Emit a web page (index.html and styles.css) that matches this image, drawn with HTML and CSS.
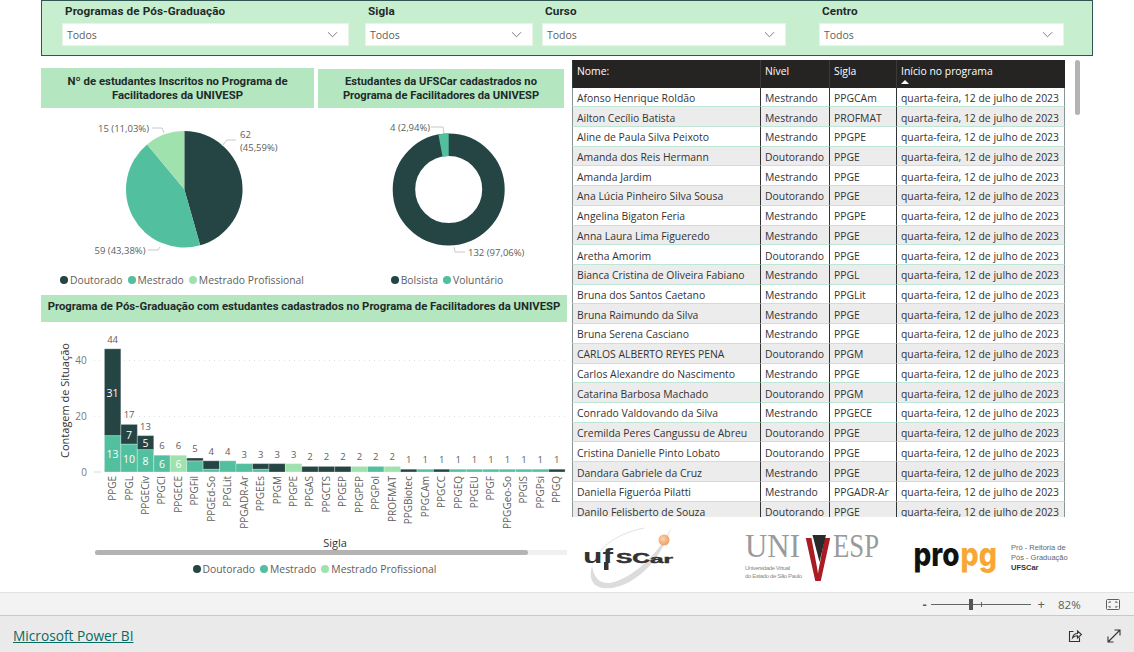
FILE: index.html
```html
<!DOCTYPE html>
<html lang="pt-BR">
<head>
<meta charset="utf-8">
<title>Microsoft Power BI</title>
<link rel="stylesheet" href="styles.css">
</head>
<body>
<main class="canvas">
  <section class="filters">
    <div class="slicer s1"><label>Programas de Pós-Graduação</label><div class="select"><span>Todos</span><svg class="chev" viewBox="0 0 12 7"><path d="M1 1l5 5 5-5"/></svg></div></div>
    <div class="slicer s2"><label>Sigla</label><div class="select"><span>Todos</span><svg class="chev" viewBox="0 0 12 7"><path d="M1 1l5 5 5-5"/></svg></div></div>
    <div class="slicer s3"><label>Curso</label><div class="select"><span>Todos</span><svg class="chev" viewBox="0 0 12 7"><path d="M1 1l5 5 5-5"/></svg></div></div>
    <div class="slicer s4"><label>Centro</label><div class="select"><span>Todos</span><svg class="chev" viewBox="0 0 12 7"><path d="M1 1l5 5 5-5"/></svg></div></div>
  </section>

  <div class="main">
    <div class="left">
      <div class="pies">
        <section class="pie-card c1">
          <h2 class="title">Nº de estudantes Inscritos no Programa de Facilitadores da UNIVESP</h2>
          <svg class="chart" viewBox="41 108 273 162" width="273" height="162">
            <path class="d" d="M184.3 189.3V131.1A58.2 58.2 0 0 1 200.2 245.3Z"/>
            <path class="m" d="M184.3 189.3L200.2 245.3A58.2 58.2 0 0 1 147.1 144.5Z"/>
            <path class="p" d="M184.3 189.3L147.1 144.5A58.2 58.2 0 0 1 184.3 131.1Z"/>
            <path class="lead" d="M152 128H162L164 133M222 146L227 140H236M160 247L158 250H148"/>
            <text class="lbl" x="98" y="132">15 (11,03%)</text>
            <text class="lbl" x="240" y="138">62</text>
            <text class="lbl" x="240" y="151">(45,59%)</text>
            <text class="lbl" x="94.500" y="254">59 (43,38%)</text>
          </svg>
          <ul class="legend"><li><i class="dot d"></i>Doutorado</li><li><i class="dot m"></i>Mestrado</li><li><i class="dot p"></i>Mestrado Profissional</li></ul>
        </section>
        <section class="pie-card c2">
          <h2 class="title">Estudantes da UFSCar cadastrados no Programa de Facilitadores da UNIVESP</h2>
          <svg class="chart" viewBox="318 108 246 162" width="246" height="162">
            <circle class="ring" cx="448.7" cy="189.5" r="44.75"/>
            <path class="m" d="M448.7 133.5A56 56 0 0 0 438.4 134.5L442.5 156.6A33.5 33.5 0 0 1 448.7 156Z"/>
            <path class="lead" d="M431 127H443L444 133M454 247L455 252H465"/>
            <text class="lbl" x="390" y="131">4 (2,94%)</text>
            <text class="lbl" x="468" y="256">132 (97,06%)</text>
          </svg>
          <ul class="legend"><li><i class="dot d"></i>Bolsista</li><li><i class="dot m"></i>Voluntário</li></ul>
        </section>
      </div>

      <section class="bars-card">
        <h2 class="title wide">Programa de Pós-Graduação com estudantes cadastrados no Programa de Facilitadores da UNIVESP</h2>
        <svg class="chart" viewBox="41 322 526 228" width="526" height="228">
          <path class="grid" d="M94 360.3H567M94 416.3H567"/>
          <path class="tick" d="M94 472H101"/>
          <text class="axis" x="81" y="364" text-anchor="middle">40</text>
          <text class="axis" x="81" y="420" text-anchor="middle">20</text>
          <text class="axis" x="84" y="476" text-anchor="middle">0</text>
          <text class="ytitle" transform="translate(69,400.5) rotate(-90)" text-anchor="middle">Contagem de Situação</text>
          <text class="xtitle" x="335" y="547" text-anchor="middle">Sigla</text>

          <g class="bars">
            <rect class="m" x="104.4" y="435.6" width="16.45" height="36.4"/><rect class="d" x="104.4" y="348.8" width="16.45" height="86.8"/>
            <rect class="m" x="120.9" y="444" width="16.45" height="28"/><rect class="d" x="120.9" y="424.4" width="16.45" height="19.6"/>
            <rect class="m" x="137.3" y="449.6" width="16.45" height="22.4"/><rect class="d" x="137.3" y="435.6" width="16.45" height="14"/>
            <rect class="m" x="153.8" y="455.2" width="16.45" height="16.8"/>
            <rect class="p" x="170.2" y="455.2" width="16.45" height="16.8"/>
            <rect class="m" x="186.7" y="460.8" width="16.45" height="11.2"/><rect class="d" x="186.7" y="458" width="16.45" height="2.8"/>
            <rect class="m" x="203.1" y="469.2" width="16.45" height="2.8"/><rect class="d" x="203.1" y="460.8" width="16.45" height="8.4"/>
            <rect class="m" x="219.6" y="460.8" width="16.45" height="11.2"/>
            <rect class="m" x="236" y="463.6" width="16.45" height="8.4"/>
            <rect class="m" x="252.5" y="469.2" width="16.45" height="2.8"/><rect class="d" x="252.5" y="463.6" width="16.45" height="5.6"/>
            <rect class="d" x="268.9" y="463.6" width="16.45" height="8.4"/>
            <rect class="p" x="285.4" y="463.6" width="16.45" height="8.4"/>
            <rect class="d" x="301.8" y="466.4" width="16.45" height="5.6"/>
            <rect class="d" x="318.3" y="466.4" width="16.45" height="5.6"/>
            <rect class="d" x="334.7" y="466.4" width="16.45" height="5.6"/>
            <rect class="p" x="351.2" y="466.4" width="16.45" height="5.6"/>
            <rect class="m" x="367.6" y="466.4" width="16.45" height="5.6"/>
            <rect class="p" x="384.1" y="466.4" width="16.45" height="5.6"/>
            <rect class="d" x="400.5" y="469.2" width="16.45" height="2.8"/>
            <rect class="m" x="417" y="469.2" width="16.45" height="2.8"/>
            <rect class="d" x="433.4" y="469.2" width="16.45" height="2.8"/>
            <rect class="m" x="449.9" y="469.2" width="16.45" height="2.8"/>
            <rect class="m" x="466.3" y="469.2" width="16.45" height="2.8"/>
            <rect class="m" x="482.8" y="469.2" width="16.45" height="2.8"/>
            <rect class="m" x="499.2" y="469.2" width="16.45" height="2.8"/>
            <rect class="m" x="515.7" y="469.2" width="16.45" height="2.8"/>
            <rect class="m" x="532.1" y="469.2" width="16.45" height="2.8"/>
            <rect class="d" x="548.6" y="469.2" width="16.45" height="2.8"/>
          </g>

          <g class="inner" text-anchor="middle">
            <text x="112.6" y="396.5">31</text><text x="112.6" y="458">13</text>
            <text x="129.1" y="438.5">7</text><text x="129.1" y="462.5">10</text>
            <text x="145.5" y="446.5">5</text><text x="145.5" y="465">8</text>
            <text x="162" y="468">6</text><text x="178.4" y="468">6</text>
          </g>

          <g class="totals" text-anchor="middle">
            <text x="112.6" y="342.8">44</text><text x="129.1" y="418.4">17</text><text x="145.5" y="429.6">13</text>
            <text x="162" y="449.2">6</text><text x="178.4" y="449.2">6</text><text x="194.9" y="452">5</text>
            <text x="211.3" y="454.8">4</text><text x="227.8" y="454.8">4</text><text x="244.2" y="457.6">3</text>
            <text x="260.7" y="457.6">3</text><text x="277.1" y="457.6">3</text><text x="293.6" y="457.6">3</text>
            <text x="310" y="460.4">2</text><text x="326.5" y="460.4">2</text><text x="342.9" y="460.4">2</text>
            <text x="359.4" y="460.4">2</text><text x="375.8" y="460.4">2</text><text x="392.3" y="460.4">2</text>
            <text x="408.7" y="463.2">1</text><text x="425.2" y="463.2">1</text><text x="441.6" y="463.2">1</text>
            <text x="458.1" y="463.2">1</text><text x="474.5" y="463.2">1</text><text x="491" y="463.2">1</text>
            <text x="507.4" y="463.2">1</text><text x="523.9" y="463.2">1</text><text x="540.3" y="463.2">1</text>
            <text x="556.8" y="463.2">1</text>
          </g>

          <g class="xl" text-anchor="end">
            <text transform="translate(116,476) rotate(-90)">PPGE</text>
            <text transform="translate(132.5,476) rotate(-90)">PPGL</text>
            <text transform="translate(149,476) rotate(-90)">PPGECiv</text>
            <text transform="translate(165.4,476) rotate(-90)">PPGCI</text>
            <text transform="translate(181.8,476) rotate(-90)">PPGECE</text>
            <text transform="translate(198.3,476) rotate(-90)">PPGFil</text>
            <text transform="translate(214.7,476) rotate(-90)">PPGEd-So</text>
            <text transform="translate(231.2,476) rotate(-90)">PPGLit</text>
            <text transform="translate(247.6,476) rotate(-90)">PPGADR-Ar</text>
            <text transform="translate(264.1,476) rotate(-90)">PPGEEs</text>
            <text transform="translate(280.5,476) rotate(-90)">PPGM</text>
            <text transform="translate(297,476) rotate(-90)">PPGPE</text>
            <text transform="translate(313.4,476) rotate(-90)">PPGAS</text>
            <text transform="translate(329.9,476) rotate(-90)">PPGCTS</text>
            <text transform="translate(346.3,476) rotate(-90)">PPGEP</text>
            <text transform="translate(362.8,476) rotate(-90)">PPGPEP</text>
            <text transform="translate(379.2,476) rotate(-90)">PPGPol</text>
            <text transform="translate(395.7,476) rotate(-90)">PROFMAT</text>
            <text transform="translate(412.1,476) rotate(-90)">PPGBiotec</text>
            <text transform="translate(428.6,476) rotate(-90)">PPGCAm</text>
            <text transform="translate(445,476) rotate(-90)">PPGCC</text>
            <text transform="translate(461.5,476) rotate(-90)">PPGEQ</text>
            <text transform="translate(477.9,476) rotate(-90)">PPGEU</text>
            <text transform="translate(494.4,476) rotate(-90)">PPGF</text>
            <text transform="translate(510.8,476) rotate(-90)">PPGGeo-So</text>
            <text transform="translate(527.3,476) rotate(-90)">PPGIS</text>
            <text transform="translate(543.7,476) rotate(-90)">PPGPsi</text>
            <text transform="translate(560.2,476) rotate(-90)">PPGQ</text>
          </g>
        </svg>
        <div class="hscroll"><div class="hthumb"></div></div>
        <ul class="legend lg3"><li><i class="dot d"></i>Doutorado</li><li><i class="dot m"></i>Mestrado</li><li><i class="dot p"></i>Mestrado Profissional</li></ul>
      </section>
    </div>

    <div class="right">
      <div class="table-wrap">
        <table class="grid-table">
          <colgroup><col class="c-n"><col class="c-l"><col class="c-s"><col class="c-d"></colgroup>
          <thead><tr><th>Nome:</th><th>Nível</th><th>Sigla</th><th>Início no programa<svg class="sort" viewBox="0 0 8 4"><path d="M4 0L8 4H0Z"/></svg></th></tr></thead>
          <tbody>
            <tr><td>Afonso Henrique Roldão</td><td>Mestrando</td><td>PPGCAm</td><td>quarta-feira, 12 de julho de 2023</td></tr>
            <tr><td>Ailton Cecílio Batista</td><td>Mestrando</td><td>PROFMAT</td><td>quarta-feira, 12 de julho de 2023</td></tr>
            <tr><td>Aline de Paula Silva Peixoto</td><td>Mestrando</td><td>PPGPE</td><td>quarta-feira, 12 de julho de 2023</td></tr>
            <tr><td>Amanda dos Reis Hermann</td><td>Doutorando</td><td>PPGE</td><td>quarta-feira, 12 de julho de 2023</td></tr>
            <tr><td>Amanda Jardim</td><td>Mestrando</td><td>PPGE</td><td>quarta-feira, 12 de julho de 2023</td></tr>
            <tr><td>Ana Lúcia Pinheiro Silva Sousa</td><td>Doutorando</td><td>PPGE</td><td>quarta-feira, 12 de julho de 2023</td></tr>
            <tr><td>Angelina Bigaton Feria</td><td>Mestrando</td><td>PPGPE</td><td>quarta-feira, 12 de julho de 2023</td></tr>
            <tr><td>Anna Laura Lima Figueredo</td><td>Mestrando</td><td>PPGE</td><td>quarta-feira, 12 de julho de 2023</td></tr>
            <tr><td>Aretha Amorim</td><td>Doutorando</td><td>PPGE</td><td>quarta-feira, 12 de julho de 2023</td></tr>
            <tr><td>Bianca Cristina de Oliveira Fabiano</td><td>Mestrando</td><td>PPGL</td><td>quarta-feira, 12 de julho de 2023</td></tr>
            <tr><td>Bruna dos Santos Caetano</td><td>Mestrando</td><td>PPGLit</td><td>quarta-feira, 12 de julho de 2023</td></tr>
            <tr><td>Bruna Raimundo da Silva</td><td>Mestrando</td><td>PPGE</td><td>quarta-feira, 12 de julho de 2023</td></tr>
            <tr><td>Bruna Serena Casciano</td><td>Mestrando</td><td>PPGE</td><td>quarta-feira, 12 de julho de 2023</td></tr>
            <tr><td>CARLOS ALBERTO REYES PENA</td><td>Doutorando</td><td>PPGM</td><td>quarta-feira, 12 de julho de 2023</td></tr>
            <tr><td>Carlos Alexandre do Nascimento</td><td>Mestrando</td><td>PPGE</td><td>quarta-feira, 12 de julho de 2023</td></tr>
            <tr><td>Catarina Barbosa Machado</td><td>Doutorando</td><td>PPGM</td><td>quarta-feira, 12 de julho de 2023</td></tr>
            <tr><td>Conrado Valdovando da Silva</td><td>Mestrando</td><td>PPGECE</td><td>quarta-feira, 12 de julho de 2023</td></tr>
            <tr><td>Cremilda Peres Cangussu de Abreu</td><td>Doutorando</td><td>PPGE</td><td>quarta-feira, 12 de julho de 2023</td></tr>
            <tr><td>Cristina Danielle Pinto Lobato</td><td>Doutorando</td><td>PPGE</td><td>quarta-feira, 12 de julho de 2023</td></tr>
            <tr><td>Dandara Gabriele da Cruz</td><td>Mestrando</td><td>PPGE</td><td>quarta-feira, 12 de julho de 2023</td></tr>
            <tr><td>Daniella Figueróa Pilatti</td><td>Mestrando</td><td>PPGADR-Ar</td><td>quarta-feira, 12 de julho de 2023</td></tr>
            <tr><td>Danilo Felisberto de Souza</td><td>Doutorando</td><td>PPGE</td><td>quarta-feira, 12 de julho de 2023</td></tr>
          </tbody>
        </table>
        <div class="vthumb"></div>
      </div>
      <svg class="logos" viewBox="572 517 500 75" width="500" height="75">
        <defs>
          <radialGradient id="orb" cx="40%" cy="40%" r="65%"><stop offset="0" stop-color="#fbd3ae"/><stop offset="1" stop-color="#ef9a5e"/></radialGradient>
        </defs>
        <path class="swoosh-thin" d="M644 528C620 533 600 545 594 562"/>
        <path class="swoosh" d="M592 566C587 584 598 590 612 588C636 584 660 562 672 526C660 553 632 579 610 583C600 584 594 578 592 566Z"/>
        <circle cx="664" cy="540" r="5.500" fill="url(#orb)"/>
        <text class="uf1" x="583" y="563" textLength="30" lengthAdjust="spacingAndGlyphs">uf</text>
        <rect class="ufstem" x="604" y="562" width="4.500" height="8"/>
        <text class="uf2" x="616" y="563" textLength="34" lengthAdjust="spacingAndGlyphs">SC</text>
        <text class="uf3" x="650" y="563" textLength="23" lengthAdjust="spacingAndGlyphs">ar</text>

        <text class="uni" x="745" y="557" textLength="55" lengthAdjust="spacingAndGlyphs">UNI</text>
        <text class="uni" x="833" y="557" textLength="46" lengthAdjust="spacingAndGlyphs">ESP</text>
        <text class="unv" transform="translate(805.500,581) scale(1.44,2.45)">V</text>
        <path class="unk" d="M812.500 535H826L819.500 562Z"/>
        <text class="unsub" x="745" y="570" textLength="45">Universidade Virtual</text>
        <text class="unsub" x="745" y="578" textLength="57">do Estado de São Paulo</text>

        <text class="pro" x="913.500" y="566" textLength="46" lengthAdjust="spacingAndGlyphs">pro</text>
        <text class="pg" x="960.500" y="566" textLength="36.500" lengthAdjust="spacingAndGlyphs">pg</text>
        <text class="prt" x="1011" y="550">Pró - Reitoria de</text>
        <text class="prt" x="1011" y="560">Pós - Graduação</text>
        <text class="prt b" x="1011" y="570">UFSCar</text>
      </svg>
    </div>
  </div>
</main>

<div class="status">
  <span class="zm minus">-</span>
  <div class="slider"><i class="s-mid"></i><i class="s-thumb"></i></div>
  <span class="zm plus">+</span>
  <span class="pct">82%</span>
  <svg class="fit" viewBox="0 0 14 11"><rect x=".5" y=".5" width="13" height="10" rx="1"/><path d="M3 4V3H5M9 3H11V4M11 7V8H9M5 8H3V7"/></svg>
</div>

<footer class="footer">
  <a class="pbi" href="#">Microsoft Power BI</a>
  <div class="foot-icons">
    <svg viewBox="0 0 14 14"><path d="M5.500 2.500H1.500V12.500H11.500V8.500"/><path d="M4.500 9C5 6 7 4.500 9.500 4.500V2L13.500 5.500L9.500 9V6.800C7.500 6.800 5.800 7.500 4.500 9Z"/></svg>
    <svg viewBox="0 0 14 14"><path d="M1 13L13 1M7.500 1H13V6.500M1 7.500V13H6.500"/></svg>
  </div>
</footer>
</body>
</html>
```
FILE: styles.css
```css
* { box-sizing: border-box; }
html, body { margin: 0; padding: 0; }
body {
  width: 1134px; height: 652px; overflow: hidden; background: #fff;
  font-family: "Open Sans", "Noto Sans", sans-serif; color: #333;
  display: flex; flex-direction: column;
}
.canvas { height: 592px; overflow: hidden; }

/* filters */
.filters {
  margin-left: 41px; width: 1052px; height: 56px; padding-left: 20px;
  background: #c8eed0; border: 1px solid #2f5650;
  display: flex;
}
.slicer { display: flex; flex-direction: column; flex: none; }
.slicer label {
  font: 700 11.700px/21px Roboto, sans-serif; color: #1f2b2a; padding-left: 3px; height: 22px; letter-spacing: .1px;
}
.s1 { width: 287px; margin-right: 16px; }
.s2 { width: 168px; margin-right: 9px; }
.s3 { width: 244px; margin-right: 33px; }
.s4 { width: 245px; }
.select {
  height: 23px; background: #fff; border: 1px solid #e8f4ea; padding: 0 10px 0 4px;
  display: flex; align-items: center; justify-content: space-between;
  font-size: 10.500px; color: #605e5c;
}
.chev { width: 11px; height: 7px; fill: none; stroke: #707070; stroke-width: 1; }

/* main */
.main { display: flex; margin-top: 4px; }
.left { width: 526px; margin-left: 41px; padding-top: 8px; flex: none; }
.right { width: 510px; margin-left: 5px; flex: none; }
.pies { display: flex; gap: 4px; }
.pie-card { display: flex; flex-direction: column; height: 227px; }
.c1 { width: 273px; }
.c2 { width: 246px; }
.title {
  margin: 0; height: 40px; background: #b4e7c0; color: #1f2b2a;
  font: 700 11.400px/14px Roboto, sans-serif; text-align: center;
  display: flex; align-items: center; justify-content: center; padding: 0 12px;
}
.title.wide { height: 27px; width: 526px; padding: 0 0 3px; font-size: 11.300px; }
.c2 .title { margin-top: 1px; height: 39px; font-size: 11.200px; }
.chart { display: block; flex: none; }
.d { fill: #254444; background: #254444; }
.m { fill: #52bf9f; background: #52bf9f; }
.p { fill: #a0e2ae; background: #a0e2ae; }
.ring { fill: none; stroke: #254444; stroke-width: 22.500; }
.lead { fill: none; stroke: #c8c8c8; stroke-width: 1; }
.lbl { font-size: 9.500px; fill: #605e5c; }
.legend {
  list-style: none; margin: 0; padding: 0; display: flex; justify-content: center; gap: 5px;
  font-size: 10.350px; color: #605e5c; line-height: 18px; height: 18px;
}
.c1 .legend { margin-top: 1px; padding-left: 9px; }
.c2 .legend { margin-top: 1px; padding-left: 12px; }
.legend li { display: flex; align-items: center; gap: 2px; }
.dot { width: 8px; height: 8px; border-radius: 50%; display: block; }
.bars-card { width: 526px; }
.grid { stroke: #d9d9d9; stroke-width: 1; stroke-dasharray: 1 4; fill: none; }
.tick { stroke: #d9d9d9; stroke-width: 1; }
.axis { font-size: 10px; fill: #777; }
.ytitle { font-size: 11px; fill: #333; }
.xtitle { font-size: 11px; fill: #333; }
.bars rect { stroke: rgba(255,255,255,.3); stroke-width: 1; }
.inner text { font-size: 10.500px; fill: #fff; }
.totals text { font-size: 9.500px; fill: #605e5c; }
.xl text { font-size: 10px; fill: #605e5c; }
.hscroll { height: 5px; margin: 0 0 0 54px; background: #f0f0f0; }
.hthumb { width: 433px; height: 5px; background: #b3b3b3; border-radius: 3px; }
.lg3 { margin-top: 5px; padding-left: 21px; }

/* table */
.table-wrap { position: relative; height: 457px; overflow: hidden; }
.grid-table { border-collapse: separate; border-spacing: 0; table-layout: fixed; width: 493px; font-size: 10.400px; color: #333; }
.c-n { width: 188px; } .c-l { width: 69px; } .c-s { width: 67px; } .c-d { width: 169px; }
.grid-table th {
  height: 27.500px; background: #252423; color: #fff; font-weight: 400; text-align: left;
  padding: 0 0 5px 4px; border-left: 1.500px solid #3a3a3a; position: relative; vertical-align: middle;
}
.grid-table th:first-child { border-left: 1px solid #2f3b3a; }
.grid-table td {
  height: 19.720px; padding: 2px 0 0 4px; white-space: nowrap; overflow: hidden;
  border-left: 1.500px solid #333; border-bottom: 1px solid #bfe6d5; background: #fff; vertical-align: middle; line-height: 16px;
}
.grid-table td:first-child { border-left: 1px solid #8a9694; }
.grid-table td:last-child { border-right: 1px solid #8a9694; }
.grid-table tbody tr:nth-child(even) td { background: #ececec; }
.sort { position: absolute; left: 4px; bottom: 4px; width: 8px; height: 4px; fill: #fff; }
.vthumb { position: absolute; left: 503px; top: 0; width: 5px; height: 55px; border-radius: 3px; background: #b3b3b3; }

/* logos */
.logos { display: block; }
.swoosh { fill: #dcdcdc; }
.swoosh-thin { fill: none; stroke: #e2e2e2; stroke-width: 1; }
.uf1 { font: 700 21px "Liberation Sans", sans-serif; fill: #333; }
.uf2 { font: 700 14px "Liberation Sans", sans-serif; fill: #333; stroke: #333; stroke-width: .5; }
.uf3 { font: 700 10px "Liberation Sans", sans-serif; fill: #333; stroke: #333; stroke-width: .4; }
.ufstem { fill: #333; }
.uni { font: 400 33px "Liberation Serif", serif; fill: #9a9a9a; }
.unv { font: 700 26px "Liberation Sans", sans-serif; fill: #a81c22; }
.unk { fill: #2a2a2a; }
.unsub { font: 400 6px "Liberation Sans", sans-serif; fill: #8a8a8a; }
.pro { font: 800 33px Inter, sans-serif; fill: #111; }
.pg { font: 800 33px Inter, sans-serif; fill: #f8a735; }
.prt { font: 400 7.500px "Liberation Sans", sans-serif; fill: #666; }
.prt.b { font-weight: 700; fill: #333; }

/* status */
.status {
  height: 24px; background: #f3f3f3; border-top: 1px solid #e2e2e2; border-bottom: 1px solid #c8c8c8;
  display: flex; align-items: center; justify-content: flex-end; padding-right: 14px; color: #605e5c;
}
.zm { font-size: 13px; line-height: 1; }
.minus { margin-right: 4px; font-weight: 700; }
.slider { position: relative; width: 100px; height: 1px; background: #666; margin-right: 7px; }
.s-thumb { position: absolute; left: 38px; top: -5px; width: 4px; height: 11px; background: #555; }
.s-mid { position: absolute; left: 50px; top: -2px; width: 1px; height: 5px; background: #666; }
.pct { font-size: 11.500px; margin-left: 13px; width: 48px; }
.fit { width: 14px; height: 11px; fill: none; stroke: #605e5c; stroke-width: 1; }

/* footer */
.footer {
  flex: 1; background: #eaeaea; display: flex; align-items: center; justify-content: space-between;
  padding: 3px 13px 0;
}
.pbi { color: #0b6a63; font-size: 13.700px; text-decoration: underline; }
.foot-icons { display: flex; gap: 25px; }
.foot-icons svg { display: block; width: 14px; height: 14px; fill: none; stroke: #333; stroke-width: 1.100; }
```
